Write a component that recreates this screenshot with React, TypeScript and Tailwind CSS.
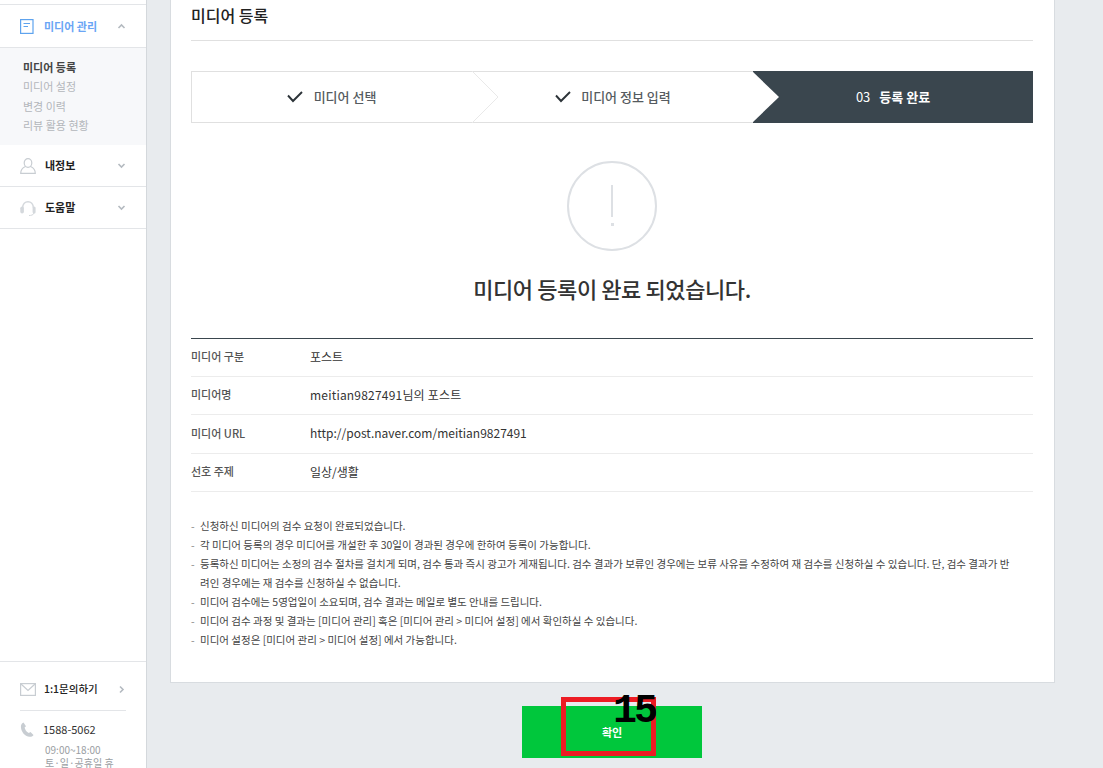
import React from "react";

const font = { fontFamily: '"Noto Sans CJK KR", "Liberation Sans", sans-serif' };

function Caret({ dir }: { dir: "up" | "down" | "right" }) {
  const d = dir === "up" ? "M1.5 6 L4.5 3 L7.5 6" : dir === "down" ? "M1.5 3 L4.5 6 L7.5 3" : "M3 1.5 L6 4.5 L3 7.5";
  return (
    <svg width="9" height="9" viewBox="0 0 9 9" fill="none" stroke="#b4bac0" strokeWidth="1.6">
      <path d={d} />
    </svg>
  );
}

function Check() {
  return (
    <svg width="16" height="12" viewBox="0 0 16 12" fill="none" stroke="#2c3338" strokeWidth="1.9">
      <path d="M1 4.5 L6 10 L15 1" />
    </svg>
  );
}

function NavItem({ icon, label, h }: { icon: React.ReactNode; label: string; h: string }) {
  return (
    <div className={`flex items-center pl-5 pr-[20px] border-b border-[#e3e5e8] ${h}`}>
      <span className="w-[25px] flex">{icon}</span>
      <span className="flex-1 text-[11px] font-bold text-[#222]">{label}</span>
      <Caret dir="down" />
    </div>
  );
}

const rows: [string, string, string, string][] = [
  ["미디어 구분", "포스트", "h-[38px]", "tracking-normal"],
  ["미디어명", "meitian9827491님의 포스트", "h-[38px]", "tracking-[0.2px]"],
  ["미디어 URL", "http://post.naver.com/meitian9827491", "h-[39px]", "tracking-normal"],
  ["선호 주제", "일상/생활", "h-[38px]", "tracking-normal"],
];

const notes = [
  "신청하신 미디어의 검수 요청이 완료되었습니다.",
  "각 미디어 등록의 경우 미디어를 개설한 후 30일이 경과된 경우에 한하여 등록이 가능합니다.",
  "등록하신 미디어는 소정의 검수 절차를 걸치게 되며, 검수 통과 즉시 광고가 게재됩니다. 검수 결과가 보류인 경우에는 보류 사유를 수정하여 재 검수를 신청하실 수 있습니다. 단, 검수 결과가 반려인 경우에는 재 검수를 신청하실 수 없습니다.",
  "미디어 검수에는 5영업일이 소요되며, 검수 결과는 메일로 별도 안내를 드립니다.",
  "미디어 검수 과정 및 결과는 [미디어 관리] 혹은 [미디어 관리 > 미디어 설정] 에서 확인하실 수 있습니다.",
  "미디어 설정은 [미디어 관리 > 미디어 설정] 에서 가능합니다.",
];

export default function App() {
  return (
    <div style={font} className="relative flex h-[768px] w-[1103px] overflow-hidden bg-[#e8ebee] text-[#333]">
      {/* Sidebar */}
      <aside className="flex h-full w-[147px] shrink-0 flex-col justify-between border-r border-[#d4d8dc] bg-white pt-[4px]">
        <div className="border-t border-[#e3e5e8]">
          <div className="flex h-[43px] items-center pl-5 pr-[20px] border-b border-[#e3e5e8]">
            <span className="flex w-[24px]">
              <svg width="14" height="15" viewBox="0 0 14 15" fill="none" stroke="#5ea3ee" strokeWidth="1.2">
                <rect x="0.6" y="0.6" width="12.4" height="13.8" />
                <path d="M3.5 4.5 H10 M3.5 7.5 H8" />
              </svg>
            </span>
            <span className="flex-1 text-[11px] font-bold text-[#6aa5f5]">미디어 관리</span>
            <Caret dir="up" />
          </div>
          <div className="flex h-[97px] flex-col bg-[#f7f8fa] pl-[23px] pt-[10px] text-[11px] leading-[19.4px] text-[#b3b6ba]">
            <span className="font-bold text-[#444]">미디어 등록</span>
            <span>미디어 설정</span>
            <span>변경 이력</span>
            <span>리뷰 활용 현황</span>
          </div>
          <NavItem
            h="h-[42px]"
            label="내정보"
            icon={
              <svg width="16" height="16" viewBox="0 0 16 16" fill="none" stroke="#c8cdd2" strokeWidth="1.2">
                <ellipse cx="8" cy="5" rx="3.8" ry="4.3" />
                <path d="M5.5 8.5 C2 10 0.7 11.5 0.7 15.4 H15.3 C15.3 11.5 14 10 10.5 8.5" />
              </svg>
            }
          />
          <NavItem
            h="h-[42px]"
            label="도움말"
            icon={
              <svg width="16" height="16" viewBox="0 0 16 16" fill="none">
                <path d="M2.6 8 C2.6 -0.5 13.4 -0.5 13.4 8" stroke="#d4d8dc" strokeWidth="1.5" />
                <rect x="0.3" y="6.5" width="3.6" height="7" rx="1.8" fill="#d4d8dc" />
                <rect x="12.6" y="6.5" width="3" height="7" rx="1.5" fill="#d4d8dc" />
                <path d="M14 13 C13.5 15 11 15.5 9 15.5" stroke="#d4d8dc" strokeWidth="1" />
              </svg>
            }
          />
        </div>
        <div className="h-[107px] border-t border-[#e3e5e8] px-5 overflow-hidden">
          <div className="flex h-[49px] items-center border-b border-[#e3e5e8] pt-[9px] pb-[3px]">
            <span className="flex w-[24px]">
              <svg width="16" height="13" viewBox="0 0 16 13" fill="none" stroke="#c8cdd2" strokeWidth="1.2">
                <rect x="0.6" y="0.6" width="14.8" height="11.8" />
                <path d="M1 1 L8 7.5 L15 1" />
              </svg>
            </span>
            <span className="flex-1 text-[10.5px] font-medium text-[#222]">1:1문의하기</span>
            <Caret dir="right" />
          </div>
          <div className="flex items-center pt-[8px]">
            <span className="flex w-[23px]">
              <svg width="14" height="15" viewBox="0 0 14 15" fill="#c8cdd2">
                <path d="M3.5 0.5 C1 1.5 0.5 4 1.2 7 C2.2 11 5.5 14.5 9.5 14.8 C11.5 15 13 14 13.5 13 L10.5 10 L8.8 11 C6.5 10 5 7.5 4.6 5.5 L6 4.2 Z" />
              </svg>
            </span>
            <span className="text-[11px] leading-[20px] text-[#333]">1588-5062</span>
          </div>
          <div className="pl-[25px] text-[10px] leading-[13px] text-[#9a9ea3]">
            <div className="mt-[4px]">09:00~18:00</div>
            <div className="whitespace-nowrap">토·일·공휴일 휴</div>
          </div>
        </div>
      </aside>

      {/* Main */}
      <main className="flex-1 pl-[23px] pr-[48px]">
        <section className="h-[683px] border border-t-0 border-[#d8dce0] bg-white pl-5 pr-[21px]">
          <h1 className="flex h-[41px] items-start border-b border-[#e0e0e0] text-[16px] font-medium leading-[30px] text-[#222]">
            미디어 등록
          </h1>

          <div className="relative mt-[30px] flex h-[52px] text-[13px]">
            <div className="flex w-[282px] items-center justify-center gap-[11px] border border-r-0 border-[#e0e0e0] pr-[2px]">
              <Check />
              <span className="font-medium text-[#555b60]">미디어 선택</span>
            </div>
            <div className="flex w-[280px] items-center justify-center gap-[10px] border-y border-[#e0e0e0]">
              <Check />
              <span className="font-medium text-[#555b60]">미디어 정보 입력</span>
            </div>
            <div className="flex flex-1 items-center justify-center gap-[9px] bg-[#3a464e] text-white">
              <span className="text-[13px]">03</span>
              <span className="font-bold">등록 완료</span>
            </div>
            <svg className="absolute left-[281px] top-0" width="28" height="52" viewBox="0 0 28 52" fill="none">
              <path d="M0 0 L26 26 L0 52" fill="#fff" stroke="#e9e9e9" strokeWidth="1" />
            </svg>
            <svg className="absolute left-[561px] top-0" width="28" height="52" viewBox="0 0 28 52">
              <path d="M0 0 L27 26 L0 52 Z" fill="#fff" />
              <path d="M0 0.5 L1 0.5 M0 51.5 L1 51.5" stroke="#e0e0e0" />
            </svg>
          </div>

          <div className="mx-auto mt-[38px] flex h-[90px] w-[90px] flex-col items-center rounded-full border-2 border-[#dde0e4] pt-[22px]">
            <span className="h-[32px] w-[2px] bg-[#dde0e4]" />
            <span className="mt-[6px] h-[3px] w-[3px] bg-[#dde0e4]" />
          </div>

          <h2 className="mt-[21px] text-center text-[22px] font-medium leading-[32px] tracking-[-0.4px] text-[#333]">
            미디어 등록이 완료 되었습니다.
          </h2>

          <div className="mt-[34px] border-t border-[#3a464e]">
            {rows.map(([k, v, h, t]) => (
              <div key={k} className={`flex items-center border-b border-[#ececec] pb-[2px] ${h}`}>
                <span className="w-[119px] text-[11px] font-medium text-[#555]">{k}</span>
                <span className={`text-[12px] text-[#333] ${t}`}>{v}</span>
              </div>
            ))}
          </div>

          <ul className="mt-[24px] pr-[20px] text-[10.5px] leading-[19px] text-[#444]">
            {notes.map((n) => (
              <li key={n} className="flex">
                <span className="w-[9px] shrink-0 text-[#888]">-</span>
                <span className="break-all">{n}</span>
              </li>
            ))}
          </ul>
        </section>

        <div className="mt-[23px] ml-[352px] flex h-[52px] w-[180px] items-center justify-center bg-[#00c73c] text-[11px] font-bold text-white">
          확인
        </div>
      </main>

      {/* Annotation overlay */}
      <div className="absolute left-[561px] top-[697px] h-[59px] w-[95px] border-[5px] border-[#ed1c24]" />
      <span
        style={{ fontFamily: '"Liberation Mono", monospace' }}
        className="absolute left-[613px] top-[690px] text-[40px] font-bold leading-[44px] tracking-[-3px] text-black"
      >
        15
      </span>
    </div>
  );
}
